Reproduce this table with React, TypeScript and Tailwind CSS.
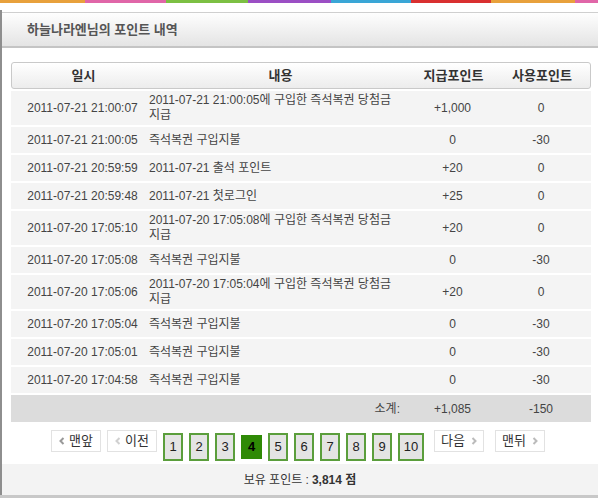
import React from "react";

type Row = { date: string; content: React.ReactNode; give: string; use: string; tall?: boolean };

const rows: Row[] = [
  { date: "2011-07-21 21:00:07", content: <>2011-07-21 21:00:05에 구입한 즉석복권 당첨금<br />지급</>, give: "+1,000", use: "0", tall: true },
  { date: "2011-07-21 21:00:05", content: "즉석복권 구입지불", give: "0", use: "-30" },
  { date: "2011-07-21 20:59:59", content: "2011-07-21 출석 포인트", give: "+20", use: "0" },
  { date: "2011-07-21 20:59:48", content: "2011-07-21 첫로그인", give: "+25", use: "0" },
  { date: "2011-07-20 17:05:10", content: <>2011-07-20 17:05:08에 구입한 즉석복권 당첨금<br />지급</>, give: "+20", use: "0", tall: true },
  { date: "2011-07-20 17:05:08", content: "즉석복권 구입지불", give: "0", use: "-30" },
  { date: "2011-07-20 17:05:06", content: <>2011-07-20 17:05:04에 구입한 즉석복권 당첨금<br />지급</>, give: "+20", use: "0", tall: true },
  { date: "2011-07-20 17:05:04", content: "즉석복권 구입지불", give: "0", use: "-30" },
  { date: "2011-07-20 17:05:01", content: "즉석복권 구입지불", give: "0", use: "-30" },
  { date: "2011-07-20 17:04:58", content: "즉석복권 구입지불", give: "0", use: "-30" },
];

const colors = [
  ["#e8a13c", 85],
  ["#e066a8", 81],
  ["#7cc043", 82],
  ["#9b4fc4", 83],
  ["#3aa6d6", 80],
  ["#d93030", 80],
  ["#e8a13c", 84],
  ["#e066a8", 23],
] as const;

const cols = "grid grid-cols-[138px_261px_85px_96px]";

function Chevron({ dir, color }: { dir: "l" | "r"; color: string }) {
  return (
    <svg width="6" height="8" viewBox="0 0 6 8" className="shrink-0">
      {dir === "l" ? (
        <path d="M4.5 1 L1.5 4 L4.5 7" stroke={color} strokeWidth="2" fill="none" />
      ) : (
        <path d="M1.5 1 L4.5 4 L1.5 7" stroke={color} strokeWidth="2" fill="none" />
      )}
    </svg>
  );
}

export default function App() {
  const font = { fontFamily: '"Liberation Sans", "Noto Sans CJK KR", sans-serif' };
  return (
    <div className="w-[598px] h-[498px] overflow-hidden bg-white text-[12px] text-[#333] flex flex-col" style={font}>
      <div className="flex h-[3px] shrink-0">
        {colors.map(([c, w], i) => (
          <div key={i} style={{ backgroundColor: c, width: w }} />
        ))}
      </div>
      <div className="h-[7px] shrink-0" />
      <div className="border-l-2 border-[#8e8e8e] flex-1 flex flex-col">
        <div className="mt-[2px] h-[36px] border-t border-[#cfcfcf] border-b-2 border-b-[#c4c4c4] bg-gradient-to-b from-[#fefefe] to-[#e4e4e4] flex items-center pl-[25px]">
          <span className="text-[13px] font-bold text-[#555]">하늘나라엔님의 포인트 내역</span>
        </div>

        <div className="ml-[9px] w-[580px] mt-[14px]">
          <div className={`${cols} h-[27px] items-center border border-[#c9c9c9] rounded-[3px] bg-gradient-to-b from-white to-[#ececec] text-[13px] font-bold text-[#333]`}>
            <div className="text-center pl-[5px]">일시</div>
            <div className="text-center">내용</div>
            <div className="text-center">지급포인트</div>
            <div className="text-center pr-[4px]">사용포인트</div>
          </div>
          <div className="flex flex-col gap-[2px] mt-[2px]">
            {rows.map((r, i) => (
              <div key={i} className={`${cols} ${r.tall ? "h-[34px]" : "h-[26px]"} items-center bg-[#f4f4f4] text-[#444] leading-[15px]`}>
                <div className="text-center pl-[5px] whitespace-nowrap">{r.date}</div>
                <div className="whitespace-nowrap">{r.content}</div>
                <div className="text-center">{r.give}</div>
                <div className="text-center pr-[4px]">{r.use}</div>
              </div>
            ))}
            <div className={`${cols} h-[27px] items-center bg-[#dcdcdc] text-[#444]`}>
              <div />
              <div className="text-right pr-[10px]">소계:</div>
              <div className="text-center">+1,085</div>
              <div className="text-center pr-[4px]">-150</div>
            </div>
          </div>
        </div>

        <div className="flex items-center justify-center mt-[8px] h-[31px] pr-[4px]">
          <div className="flex items-center gap-[4px] h-[22px] w-[50px] justify-center border border-[#e2e2e2] self-start text-[13px]">
            <Chevron dir="l" color="#999" />
            <span>맨앞</span>
          </div>
          <div className="ml-[6px] flex items-center gap-[4px] h-[22px] w-[50px] justify-center border border-[#e2e2e2] self-start text-[13px]">
            <Chevron dir="l" color="#d0d0d0" />
            <span>이전</span>
          </div>
          <div className="ml-[6px] flex items-center gap-[6px] self-start mt-[3px]">
            {[1, 2, 3, 4, 5, 6, 7, 8, 9, 10].map((n) =>
              n === 4 ? (
                <div key={n} className="w-[21px] h-[24px] bg-[#2f8a06] flex items-center justify-center font-bold text-[13px] text-black">
                  {n}
                </div>
              ) : (
                <div
                  key={n}
                  className={`${n === 10 ? "w-[26px]" : "w-[20px]"} h-[28px] border-2 border-[#5b9e3c] bg-[#e4e4e4] flex items-center justify-center text-[13px] text-[#222]`}
                >
                  {n}
                </div>
              )
            )}
          </div>
          <div className="ml-[10px] flex items-center gap-[6px] h-[22px] w-[50px] justify-center border border-[#e2e2e2] self-start text-[13px]">
            <span>다음</span>
            <Chevron dir="r" color="#bbb" />
          </div>
          <div className="ml-[11px] flex items-center gap-[6px] h-[22px] w-[50px] justify-center border border-[#e2e2e2] self-start text-[13px]">
            <span>맨뒤</span>
            <Chevron dir="r" color="#bbb" />
          </div>
        </div>

        <div className="mt-[3px] flex-1 bg-[#f3f3f3] flex items-center justify-center text-[12px] text-[#333]">
          <span>보유 포인트 : </span>
          <span className="font-bold ml-[3px]">3,814 점</span>
        </div>
      </div>
      <div className="h-[3px] shrink-0 bg-[#c8c8c8]" />
    </div>
  );
}
